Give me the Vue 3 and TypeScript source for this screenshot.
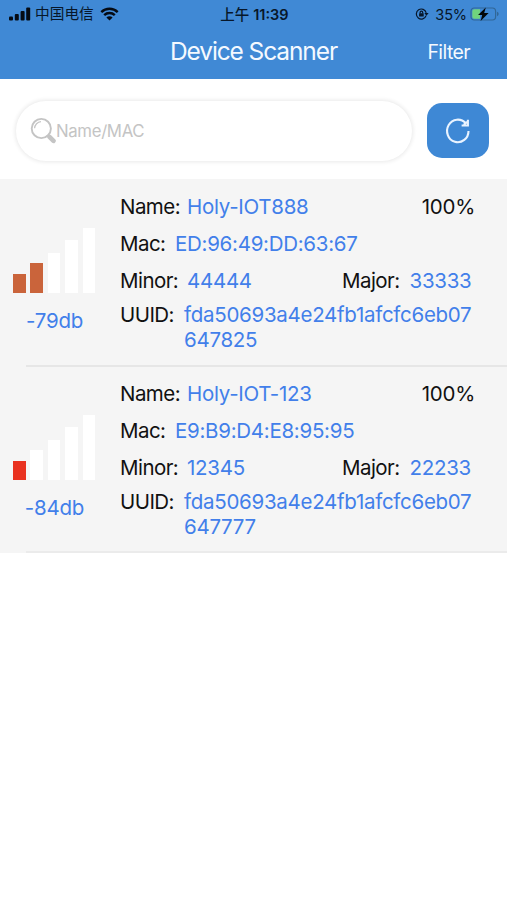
<script setup lang="ts">
interface Device {
  name: string
  mac: string
  minor: string
  major: string
  uuid: string
  battery: number
  rssi: number
  level: number
  color: string
}

const barHeights: number[] = [19, 30, 40, 53, 65]

const devices: Device[] = [
  {
    name: 'Holy-IOT888',
    mac: 'ED:96:49:DD:63:67',
    minor: '44444',
    major: '33333',
    uuid: 'fda50693a4e24fb1afcfc6eb07647825',
    battery: 100,
    rssi: -79,
    level: 2,
    color: '#ca643b',
  },
  {
    name: 'Holy-IOT-123',
    mac: 'E9:B9:D4:E8:95:95',
    minor: '12345',
    major: '22233',
    uuid: 'fda50693a4e24fb1afcfc6eb07647777',
    battery: 100,
    rssi: -84,
    level: 1,
    color: '#e9311f',
  },
]
</script>

<template>
  <div class="screen">
    <header class="header">
      <div class="status">
        <div class="carrier">
          <svg class="cell" width="22" height="14" viewBox="0 0 22 14">
            <rect x="0" y="9.5" width="4" height="4" rx="1" />
            <rect x="5.8" y="7" width="4" height="6.5" rx="1" />
            <rect x="11.6" y="4" width="4" height="9.5" rx="1" />
            <rect x="17.2" y="0.5" width="4" height="13" rx="1" />
          </svg>
          <span class="carrier-name">中国电信</span>
          <svg class="wifi" width="19" height="14" viewBox="0 0 19 14">
            <path d="M1.3 5.1A11.8 11.8 0 0 1 17.7 5.1" />
            <path d="M4.2 8.2A7.6 7.6 0 0 1 14.8 8.2" />
            <path class="dot" d="M6.4 10.5A4.4 4.4 0 0 1 12.6 10.5L9.5 13.6Z" />
          </svg>
        </div>
        <div class="time">上午 <b>11:39</b></div>
        <div class="power">
          <svg class="lock" width="14" height="12" viewBox="0 0 14 12">
            <path class="ring" d="M11.1 7.6A5 5 0 1 1 11.2 4.8" />
            <path d="M9.3 4.9H13.6L11.5 7.8Z" />
            <rect x="4.1" y="5.3" width="4.6" height="3.3" rx=".4" />
            <path class="shackle" d="M5.1 5.5V4.4A1.3 1.3 0 0 1 7.7 4.4V5.5" />
          </svg>
          <span class="percent">35%</span>
          <svg class="battery" width="30" height="16" viewBox="0 0 30 16">
            <rect class="shell" x="1" y="2" width="24.6" height="12" rx="3.2" />
            <path class="fill" d="M4.2 3.3H10V12.7H4.2A1.9 1.9 0 0 1 2.3 10.8V5.2A1.9 1.9 0 0 1 4.2 3.3Z" />
            <path class="cap" d="M27 5.8Q28.7 6.4 28.7 8T27 10.2Z" />
            <path class="bolt" d="M15.8 1.4L8 8.9H12.2L10.6 15L18.6 7.1H14.2Z" />
          </svg>
        </div>
      </div>
      <div class="nav">
        <h1 class="title">Device Scanner</h1>
        <span class="filter">Filter</span>
      </div>
    </header>

    <section class="toolbar">
      <label class="search">
        <svg width="27" height="27" viewBox="0 0 27 27">
          <circle cx="11.3" cy="11.5" r="9.6" />
          <path class="glint" d="M4.6 11.3A6.9 6.9 0 0 1 11 4.7" />
          <path class="neck" d="M17.6 18L19.5 20" />
          <path class="handle" d="M19.5 19.9L23.5 23.8" />
        </svg>
        <span>Name/MAC</span>
      </label>
      <button class="refresh" type="button" aria-label="Refresh">
        <svg width="28" height="28" viewBox="0 0 28 28">
          <path d="M24.5 13.9A10.7 11.3 0 1 1 21.7 6.3" />
          <path d="M17.6 8.5H23.9V2.7M19.8 7.7L23 4.9" />
        </svg>
      </button>
    </section>

    <main>
      <article v-for="device in devices" :key="device.mac" class="device">
        <div class="signal">
          <div class="bars">
            <i
              v-for="(height, index) in barHeights"
              :key="index"
              :style="{ height: height + 'px', background: index < device.level ? device.color : '#fff' }"
            ></i>
          </div>
          <span class="rssi">{{ device.rssi }}db</span>
        </div>
        <div class="details">
          <div class="row">
            <span class="label name-label">Name:</span>
            <span class="value name-value">{{ device.name }}</span>
            <span class="charge">{{ device.battery }}%</span>
          </div>
          <div class="row">
            <span class="label mac-label">Mac:</span>
            <span class="value mac-value">{{ device.mac }}</span>
          </div>
          <div class="row">
            <span class="label minor-label">Minor:</span>
            <span class="value minor-value">{{ device.minor }}</span>
            <span class="label major-label">Major:</span>
            <span class="value">{{ device.major }}</span>
          </div>
          <div class="row uuid-row">
            <span class="label uuid-label">UUID:</span>
            <span class="value uuid">{{ device.uuid }}</span>
          </div>
        </div>
      </article>
    </main>
  </div>
</template>

<style>
body {
  margin: 0;
  background: #fff;
}
</style>

<style scoped>
.screen {
  width: 507px;
  height: 900px;
  overflow: hidden;
  background: #fff;
  color: #111;
  font-family: Inter, "Noto Sans CJK SC", sans-serif;
}

.header {
  height: 79px;
  background: #4089d5;
}

.status {
  display: grid;
  grid-template-columns: 1fr auto 1fr;
  align-items: center;
  height: 27px;
  padding: 0 7px 0 9px;
  color: #07172a;
  font-size: 14.5px;
  line-height: 27px;
}

.carrier,
.power {
  display: flex;
  align-items: center;
}

.carrier-name {
  margin-left: 4px;
  padding-top: 1px;
  font-size: 14.7px;
}

.cell {
  margin-top: -1px;
  fill: #050b14;
}

.wifi {
  margin-top: -1px;
  margin-left: 6px;
  fill: none;
  stroke: #050b14;
  stroke-width: 2.4;
}

.wifi .dot {
  fill: #050b14;
  stroke: none;
}

.time {
  font-weight: 500;
}

.time b {
  font-weight: 600;
}

.power {
  justify-content: flex-end;
}

.lock {
  margin-right: 6px;
  fill: #07172a;
}

.lock .ring,
.lock .shackle {
  fill: none;
  stroke: #07172a;
  stroke-width: 1.2;
}

.percent {
  margin-right: 3px;
  letter-spacing: -0.1px;
}

.battery {
  margin-top: -1px;
}

.battery .shell {
  fill: none;
  stroke: #316797;
  stroke-width: 1.2;
}

.battery .fill {
  fill: #71d47d;
}

.battery .cap {
  fill: #316797;
}

.battery .bolt {
  fill: #020609;
}

.nav {
  display: grid;
  grid-template-columns: 1fr auto 1fr;
  align-items: center;
  height: 49px;
  color: #f4f9ff;
}

.title {
  grid-column: 2;
  margin: 0 0 2px;
  font-size: 24.5px;
  font-weight: 400;
  letter-spacing: -1.1px;
}

.filter {
  justify-self: end;
  margin: 1px 37px 0 0;
  font-size: 19.5px;
  letter-spacing: -0.6px;
}

.toolbar {
  display: flex;
  align-items: center;
  gap: 15px;
  box-sizing: border-box;
  height: 100px;
  padding: 3px 18px 0 16px;
}

.search {
  display: flex;
  align-items: center;
  box-sizing: border-box;
  width: 396px;
  height: 60px;
  padding-left: 14px;
  border-radius: 30px;
  background: #fff;
  box-shadow: 0 0 4px 1px #e9e9e9;
  color: #c4c4c4;
  font-size: 16.8px;
  letter-spacing: -0.35px;
}

.search svg {
  flex: none;
  margin-right: -1px;
  fill: none;
  stroke: #c4c4c4;
  stroke-width: 1.9;
}

.search .glint {
  stroke-width: 1.2;
}

.search .neck {
  stroke-width: 2;
}

.search .handle {
  stroke-width: 4.6;
  stroke-linecap: round;
}

.refresh {
  display: flex;
  align-items: center;
  justify-content: center;
  width: 62px;
  height: 55px;
  padding: 0;
  border: 0;
  border-radius: 15px;
  background: #3e88d5;
}

.refresh svg {
  fill: none;
  stroke: #e9f3ff;
  stroke-width: 2.1;
}

.device {
  position: relative;
  display: flex;
  box-sizing: border-box;
  height: 187px;
  background: #f5f5f5;
}

.device::after {
  position: absolute;
  z-index: 1;
  right: 0;
  bottom: -1px;
  left: 26px;
  height: 2px;
  background: #e6e6e6;
  content: "";
}

.device:last-child::after {
  bottom: 0;
  background: #ebebeb;
}

.signal {
  width: 120px;
  padding-top: 49px;
  font-size: 20.5px;
  letter-spacing: -0.2px;
}

.bars {
  display: flex;
  align-items: flex-end;
  gap: 4.9px;
  height: 65px;
  padding-left: 13px;
}

.bars i {
  width: 12.5px;
}

.rssi {
  display: block;
  width: 109px;
  margin-top: 15px;
  color: #427fea;
  line-height: 25px;
  text-align: center;
}

.details {
  width: 387px;
  padding-top: 9px;
  font-size: 20.5px;
  letter-spacing: -0.28px;
}

.row {
  display: flex;
  height: 36.8px;
  line-height: 37px;
  white-space: nowrap;
}

.label {
  letter-spacing: -0.55px;
}

.value {
  color: #427fea;
}

.name-label {
  width: 67px;
}

.mac-label {
  width: 55px;
}

.minor-label {
  width: 67px;
}

.minor-value {
  width: 155px;
}

.major-label {
  width: 67.5px;
}

.uuid-label {
  width: 64px;
}

.charge {
  margin: 0 32px 0 auto;
}

.uuid-row {
  height: 50px;
  padding-top: 3.6px;
  line-height: 25px;
}

.uuid {
  width: 292px;
  white-space: normal;
  word-break: break-all;
}
</style>
